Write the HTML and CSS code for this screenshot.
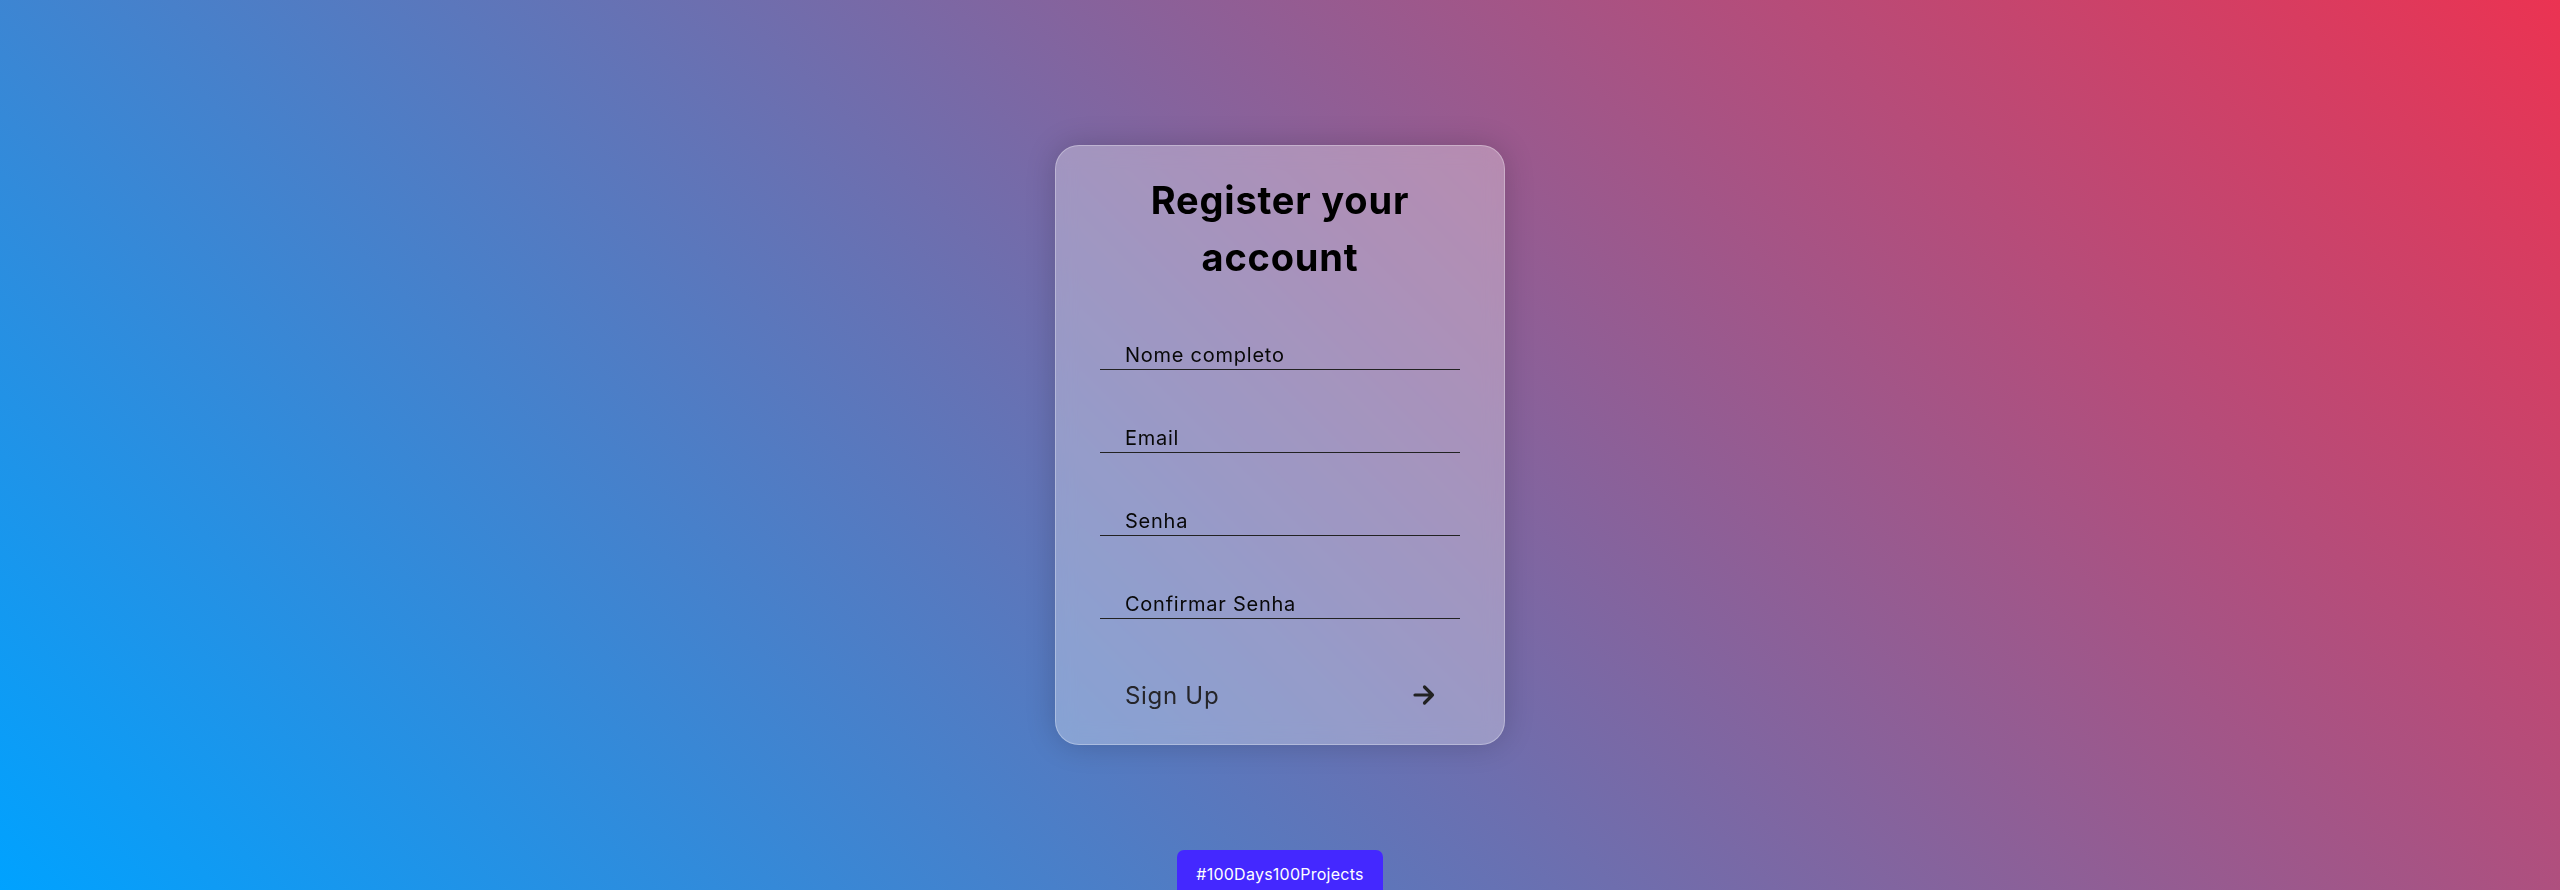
FILE: index.html
```html
<!DOCTYPE html>
<html lang="en">
<head>
<meta charset="UTF-8">
<title>Register your account</title>
<link rel="stylesheet" href="styles.css">
</head>
<body>
  <main class="page">
    <form class="card">
      <h1 class="title">Register your<br>account</h1>
      <div class="fields">
        <input class="field" type="text" placeholder="Nome completo">
        <input class="field" type="email" placeholder="Email">
        <input class="field" type="password" placeholder="Senha">
        <input class="field" type="password" placeholder="Confirmar Senha">
      </div>
      <button class="signup" type="button">
        <span class="signup-label">Sign Up</span>
        <svg class="arrow" width="22" height="22" viewBox="0 0 22 22" aria-hidden="true">
          <path d="M2 11H19.5M11.5 3L19.5 11L11.5 19" fill="none" stroke="#222" stroke-width="3.2" stroke-linecap="round" stroke-linejoin="round"/>
        </svg>
      </button>
    </form>
  </main>
  <div class="badge">#100Days100Projects</div>
</body>
</html>
```

FILE: styles.css
```css
* {
  box-sizing: border-box;
}

html, body {
  margin: 0;
  height: 100%;
}

body {
  font-family: "Inter", "Open Sans", sans-serif;
  background: linear-gradient(45deg, #00a2ff, #eb3352);
  overflow: hidden;
}

.page {
  height: 100%;
  display: flex;
  align-items: center;
  justify-content: center;
}

.card {
  width: 450px;
  height: 600px;
  border-radius: 24px;
  border: 1px solid rgba(255, 255, 255, 0.3);
  background: rgba(255, 255, 255, 0.3);
  box-shadow: 0 0 30px rgba(0, 0, 0, 0.18);
  backdrop-filter: blur(10px);
  display: flex;
  flex-direction: column;
  align-items: center;
  padding-top: 26px;
}

.title {
  margin: 0;
  font-size: 38px;
  line-height: 57px;
  font-weight: 700;
  letter-spacing: 0.8px;
  color: #000;
  text-align: center;
}

.fields {
  margin-top: 54px;
  display: flex;
  flex-direction: column;
  gap: 53px;
  width: 360px;
}

.field {
  width: 100%;
  height: 30px;
  padding: 0 25px;
  border: none;
  border-bottom: 1px solid #222;
  background: transparent;
  font-family: inherit;
  font-size: 20px;
  letter-spacing: 0.75px;
  color: #080808;
  outline: none;
}

.field::placeholder {
  color: #080808;
  opacity: 1;
}

.signup {
  margin-top: 51px;
  width: 360px;
  height: 50px;
  padding: 0 25px;
  border: none;
  background: transparent;
  display: flex;
  align-items: center;
  justify-content: space-between;
  cursor: pointer;
  font-family: inherit;
}

.signup-label {
  font-size: 24px;
  letter-spacing: 0.7px;
  color: #25252a;
}

.arrow {
  display: block;
}

.badge {
  position: fixed;
  left: 50%;
  bottom: 0;
  transform: translateX(-50%);
  width: 206px;
  height: 40px;
  padding-top: 12px;
  background: #4428ff;
  color: #fff;
  font-size: 16px;
  line-height: 24px;
  letter-spacing: 0.25px;
  text-align: center;
  border-radius: 7px 7px 0 0;
}
```
